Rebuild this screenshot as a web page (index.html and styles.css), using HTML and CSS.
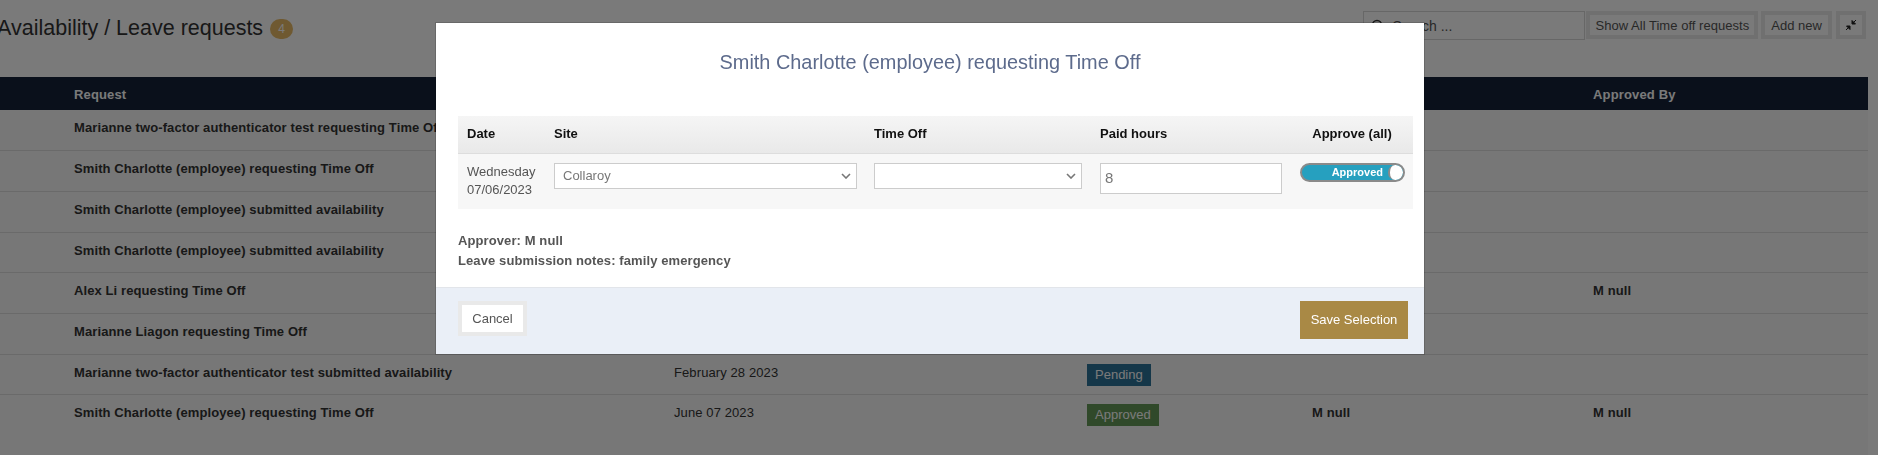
FILE: index.html
```html
<!DOCTYPE html>
<html lang="en">
<head>
  <meta charset="UTF-8">
  <meta name="viewport" content="width=device-width, initial-scale=1.0">
  <title>Availability / Leave requests</title>
  <link rel="stylesheet" href="styles.css">
</head>
<body>

  <div class="pagina">
    <div class="cabecera">
      <h1 class="titulo">Availability / Leave requests <span class="contador">4</span></h1>
      <div class="acciones">
        <div class="buscar">
          <svg class="lupa" width="14" height="14" viewBox="0 0 14 14"><circle cx="6" cy="6" r="4.5" fill="none" stroke="#333" stroke-width="1.6"/><path d="M9.5 9.5L13 13" stroke="#333" stroke-width="1.6"/></svg>
          <span>Search ...</span>
        </div>
        <button class="boton boton-largo">Show All Time off requests</button>
        <button class="boton">Add new</button>
        <button class="boton boton-icono">
          <svg width="12" height="12" viewBox="0 0 12 12"><path d="M11 1L7.5 4.5M7 1.5V5H10.5ZM1 11L4.5 7.5M5 10.5V7H1.5Z" stroke="#222" stroke-width="1" fill="#222"/></svg>
        </button>
      </div>
    </div>

    <table class="tabla">
      <thead>
        <tr><th>Request</th><th></th><th></th><th></th><th>Approved By</th></tr>
      </thead>
      <tbody>
        <tr><td class="nombre">Marianne two-factor authenticator test requesting Time Off</td><td></td><td></td><td></td><td></td></tr>
        <tr><td class="nombre">Smith Charlotte (employee) requesting Time Off</td><td></td><td></td><td></td><td></td></tr>
        <tr><td class="nombre">Smith Charlotte (employee) submitted availability</td><td></td><td></td><td></td><td></td></tr>
        <tr><td class="nombre">Smith Charlotte (employee) submitted availability</td><td></td><td></td><td></td><td></td></tr>
        <tr><td class="nombre">Alex Li requesting Time Off</td><td></td><td></td><td></td><td class="nombre">M null</td></tr>
        <tr><td class="nombre">Marianne Liagon requesting Time Off</td><td></td><td></td><td></td><td></td></tr>
        <tr><td class="nombre">Marianne two-factor authenticator test submitted availability</td><td>February 28 2023</td><td><span class="estado pendiente">Pending</span></td><td></td><td></td></tr>
        <tr><td class="nombre">Smith Charlotte (employee) requesting Time Off</td><td>June 07 2023</td><td><span class="estado aprobado">Approved</span></td><td class="nombre">M null</td><td class="nombre">M null</td></tr>
      </tbody>
    </table>
  </div>

  <div class="velo"></div>

  <div class="modal">
    <h2 class="modal-titulo">Smith Charlotte (employee) requesting Time Off</h2>

    <table class="dias">
      <thead>
        <tr><th>Date</th><th>Site</th><th>Time Off</th><th>Paid hours</th><th class="centro">Approve (all)</th></tr>
      </thead>
      <tbody>
        <tr>
          <td>Wednesday<br>07/06/2023</td>
          <td><div class="campo"><span>Collaroy</span><svg class="flecha" width="10" height="6" viewBox="0 0 10 6"><path d="M1 1l4 4 4-4" fill="none" stroke="#777" stroke-width="1.6"/></svg></div></td>
          <td><div class="campo"><span></span><svg class="flecha" width="10" height="6" viewBox="0 0 10 6"><path d="M1 1l4 4 4-4" fill="none" stroke="#777" stroke-width="1.6"/></svg></div></td>
          <td><div class="campo campo-alto">8</div></td>
          <td><div class="interruptor"><span>Approved</span><i class="perilla"></i></div></td>
        </tr>
      </tbody>
    </table>

    <div class="notas">
      <div>Approver: M null</div>
      <div>Leave submission notes: family emergency</div>
    </div>

    <div class="modal-pie">
      <button class="cancelar">Cancel</button>
      <button class="guardar">Save Selection</button>
    </div>
  </div>

</body>
</html>
```

FILE: styles.css
```css
html, body {
  margin: 0;
  height: 455px;
  overflow: hidden;
}

body {
  font-family: 'Liberation Sans', Arial, sans-serif;
  font-size: 13px;
  color: #333;
  background-color: #fff;
}

.pagina {
  padding-top: 11px;
}

.cabecera {
  display: flex;
  justify-content: space-between;
  height: 66px;
  padding-right: 12px;
}

.titulo {
  margin: 4px 0 0 -3px;
  font-size: 21.5px;
  font-weight: normal;
  line-height: 26px;
  color: #333;
  white-space: nowrap;
}

.contador {
  display: inline-block;
  width: 23px;
  height: 20px;
  margin-left: 1px;
  border-radius: 10px;
  background-color: #e8bb66;
  color: #fff;
  font-size: 12px;
  line-height: 20px;
  text-align: center;
  vertical-align: 2px;
}

.acciones {
  display: flex;
  align-items: flex-start;
}

.buscar {
  display: flex;
  align-items: center;
  gap: 7px;
  width: 222px;
  height: 29px;
  padding-left: 7px;
  box-sizing: border-box;
  border: 1px solid #d8d8d8;
  font-size: 14px;
  color: #555;
}

.boton {
  height: 28px;
  margin-left: 3px;
  padding: 0 6px;
  border: 4px solid #ebebeb;
  background-color: #fff;
  font-family: inherit;
  font-size: 13px;
  letter-spacing: 0.03px;
  color: #555;
}

.boton-largo {
  margin-left: 1px;
  padding: 0 5px;
}

.boton-icono {
  width: 30px;
  margin-left: 4px;
  padding: 0;
  line-height: 0;
}

.tabla {
  width: 1868px;
  border-collapse: collapse;
  table-layout: fixed;
}

.tabla th {
  height: 33px;
  padding: 2px 0 0;
  box-sizing: border-box;
  background-color: #15233a;
  color: #fff;
  font-size: 13px;
  letter-spacing: 0.15px;
  text-align: left;
}

.tabla th:first-child,
.tabla td:first-child {
  padding-left: 74px;
}

.tabla th:nth-child(1) { width: 674px; }
.tabla th:nth-child(2) { width: 413px; }
.tabla th:nth-child(3) { width: 225px; }
.tabla th:nth-child(4) { width: 281px; }

.tabla td {
  height: 40.7px;
  padding: 10px 0 0;
  border-bottom: 1px solid #ddd;
  background-color: #f9f9f9;
  vertical-align: top;
  box-sizing: border-box;
  letter-spacing: 0.1px;
  white-space: nowrap;
}

.tabla tbody tr:last-child td {
  height: 61px;
  border-bottom: none;
}

.nombre {
  font-weight: bold;
}

.estado {
  display: inline-block;
  height: 22px;
  margin-top: -1px;
  padding: 0 8px;
  font-size: 13px;
  letter-spacing: 0;
  line-height: 22px;
  color: #fff;
}

.pendiente { background-color: #2c749a; }
.aprobado { background-color: #659958; }

.velo {
  position: fixed;
  inset: 0;
  background-color: rgba(0, 0, 0, 0.52);
}

.modal {
  position: fixed;
  top: 23px;
  left: 436px;
  width: 988px;
  height: 331px;
  background-color: #fff;
  box-shadow: 0 0 0 1px rgba(0, 0, 0, 0.15);
  display: flex;
  flex-direction: column;
}

.modal-titulo {
  margin: 0;
  padding-top: 27px;
  height: 66px;
  font-size: 19.9px;
  font-weight: normal;
  line-height: 24px;
  text-align: center;
  color: #5d6b8c;
}

.dias {
  width: 955px;
  margin-left: 22px;
  border-collapse: collapse;
  table-layout: fixed;
}

.dias th {
  height: 37px;
  padding: 0 0 2px;
  box-sizing: border-box;
  border-bottom: 1px solid #ddd;
  background: linear-gradient(#f5f5f5, #e9e9e9);
  color: #111;
  font-size: 13px;
  text-align: left;
}

.dias td {
  height: 55px;
  padding: 0;
  background-color: #f7f7f7;
  vertical-align: top;
  color: #555;
  line-height: 18px;
}

.dias td:first-child {
  padding-top: 9px;
  box-sizing: border-box;
}

.dias th:nth-child(1), .dias td:nth-child(1) { padding-left: 9px; }
.dias th:nth-child(1) { width: 96px; }
.dias th:nth-child(2) { width: 320px; }
.dias th:nth-child(3) { width: 226px; }
.dias th:nth-child(4) { width: 200px; }

.dias th.centro {
  padding-right: 9px;
  text-align: center;
}

.campo {
  display: flex;
  align-items: center;
  justify-content: space-between;
  height: 26px;
  margin-top: 9px;
  padding: 0 5px 0 8px;
  box-sizing: border-box;
  border: 1px solid #ccc;
  background-color: #fff;
  color: #777;
}

.dias td:nth-child(2) .campo { width: 303px; }
.dias td:nth-child(3) .campo { width: 208px; }

.campo-alto {
  width: 182px;
  height: 31px;
  padding-left: 4px;
  font-size: 15px;
}

.interruptor {
  display: flex;
  align-items: center;
  justify-content: flex-end;
  width: 105px;
  height: 19px;
  margin-top: 9px;
  box-sizing: border-box;
  border: 2px solid #8a8a8a;
  border-radius: 10px;
  background-color: #26a0bf;
  color: #fff;
  font-size: 11px;
  font-weight: bold;
  overflow: hidden;
}

.perilla {
  width: 13px;
  height: 15px;
  margin-left: 5px;
  border-radius: 7px;
  border-left: 2px solid #8a8a8a;
  background-color: #fff;
}

.notas {
  margin: 22px 0 0 22px;
  height: 56px;
  font-weight: bold;
  letter-spacing: 0.1px;
  color: #555;
  line-height: 20px;
}

.modal-pie {
  display: flex;
  justify-content: space-between;
  align-items: flex-start;
  flex: 1;
  padding: 13px 16px 0 22px;
  border-top: 1px solid #e2e5ea;
  background-color: #eaeff7;
}

.cancelar {
  width: 69px;
  height: 35px;
  border: 4px solid #e9e9e9;
  background-color: #fff;
  font-family: inherit;
  font-size: 13px;
  color: #555;
}

.guardar {
  width: 108px;
  height: 38px;
  border: none;
  background-color: #a98945;
  font-family: inherit;
  font-size: 13px;
  color: #fff;
}
```
